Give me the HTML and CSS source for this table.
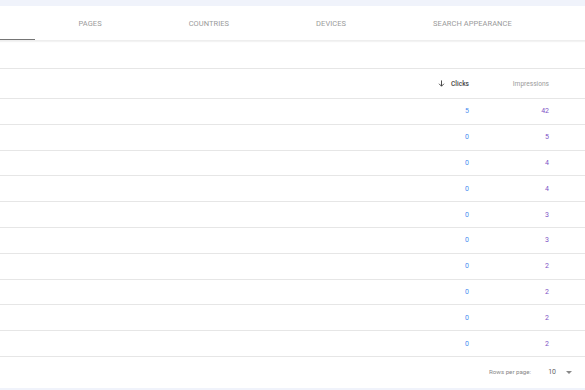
FILE: index.html
```html
<!DOCTYPE html>
<html lang="en">
<head>
  <meta charset="UTF-8">
  <title>Performance</title>
  <link rel="stylesheet" href="styles.css">
</head>
<body>
  <div class="band"></div>

  <div class="tabs">
    <a href="#" class="tab first active"></a>
    <a href="#" class="tab">Pages</a>
    <a href="#" class="tab">Countries</a>
    <a href="#" class="tab">Devices</a>
    <a href="#" class="tab">Search appearance</a>
  </div>

  <div class="spacer"></div>

  <div class="row head">
    <span></span>
    <span class="clicks-head">
      <svg class="arrow" width="7" height="7" viewBox="0 0 8 8"><path d="M4 0.5V7M1.2 4.3L4 7.1L6.8 4.3" fill="none" stroke="#333" stroke-width="1"/></svg>
      Clicks
    </span>
    <span class="impr-head">Impressions</span>
  </div>

  <div class="row"><span></span><span class="clicks">5</span><span class="impr">42</span></div>
  <div class="row"><span></span><span class="clicks">0</span><span class="impr">5</span></div>
  <div class="row"><span></span><span class="clicks">0</span><span class="impr">4</span></div>
  <div class="row"><span></span><span class="clicks">0</span><span class="impr">4</span></div>
  <div class="row"><span></span><span class="clicks">0</span><span class="impr">3</span></div>
  <div class="row"><span></span><span class="clicks">0</span><span class="impr">3</span></div>
  <div class="row"><span></span><span class="clicks">0</span><span class="impr">2</span></div>
  <div class="row"><span></span><span class="clicks">0</span><span class="impr">2</span></div>
  <div class="row"><span></span><span class="clicks">0</span><span class="impr">2</span></div>
  <div class="row"><span></span><span class="clicks">0</span><span class="impr">2</span></div>

  <div class="footer">
    <span class="label">Rows per page:</span>
    <span class="count">10</span>
    <span class="caret"></span>
  </div>

  <div class="band bottom"></div>
</body>
</html>
```

FILE: styles.css
```css
body {
  margin: 0;
  font-family: Roboto, 'Liberation Sans', sans-serif;
  background-color: #fff;
  color: #333;
  overflow: hidden;
  height: 390px;
}
.band {
  height: 6px;
  background-color: #f0f3fb;
}
.band.bottom {
  height: 10px;
}
.tabs {
  display: flex;
  height: 34px;
  border-bottom: 1px solid #eee;
  box-shadow: 0 1px 1px #f3f3f3;
}
.tab {
  display: flex;
  align-items: center;
  padding: 1px 43.5px 0;
  font-size: 7.5px;
  letter-spacing: 0.05px;
  text-transform: uppercase;
  color: #9a9a9a;
  text-decoration: none;
  box-sizing: border-box;
  border-bottom: 1.5px solid transparent;
}
.tab.first {
  width: 35px;
  padding: 0;
}
.tab.active {
  border-bottom-color: #757575;
}
.spacer {
  height: 27px;
  border-bottom: 1px solid #e6e6e6;
}
.row {
  display: grid;
  grid-template-columns: 1fr 80px 80px;
  align-items: center;
  height: 25.8px;
  box-sizing: border-box;
  padding-right: 36px;
  border-bottom: 1px solid #e6e6e6;
  font-size: 7px;
}
.row.head {
  height: 30px;
}
.clicks, .impr, .clicks-head, .impr-head {
  text-align: right;
}
.clicks {
  color: #4a8df0;
}
.impr {
  color: #7e52c6;
}
.clicks-head {
  font-weight: 500;
  font-size: 6.6px;
  color: #444;
}
.arrow {
  vertical-align: -1px;
  margin-right: 4px;
}
.impr-head {
  font-size: 6.6px;
  color: #9a9a9a;
}
.footer {
  display: flex;
  justify-content: flex-end;
  align-items: center;
  height: 31px;
  padding-right: 13px;
  font-size: 6.2px;
  color: #888;
}
.count {
  margin-left: 17px;
  font-size: 7px;
  color: #666;
}
.caret {
  width: 0;
  height: 0;
  margin-left: 10px;
  border-left: 3px solid transparent;
  border-right: 3px solid transparent;
  border-top: 3px solid #888;
}
```
